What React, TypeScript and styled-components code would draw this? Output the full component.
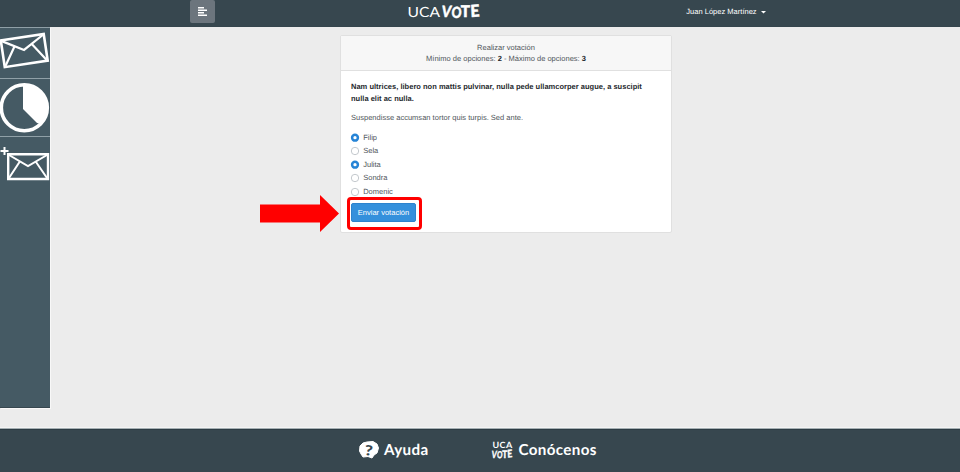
import React from 'react';
import styled, { createGlobalStyle } from 'styled-components';

const Global = createGlobalStyle`
  * { box-sizing: border-box; }
  body { margin: 0; background: #ececec; overflow: hidden; }
`;

const Page = styled.div`
  width: 960px;
  height: 472px;
  display: flex;
  flex-direction: column;
  background: #ececec;
  color: #50565b;
  font: 7.5px/11.6px 'Liberation Sans', Arial, sans-serif;
  letter-spacing: 0.015px;
  text-rendering: geometricPrecision;
`;
const Header = styled.header`
  height: 27px;
  flex: none;
  display: grid;
  grid-template-columns: 190px 1fr 1fr 190px;
  background: #37474f;
  border-bottom: 1px solid #35454d;
`;
const MenuButton = styled.button`
  width: 25px;
  height: 23px;
  padding: 0;
  border: 0;
  border-radius: 2px;
  background: #6c757d;
  display: flex;
  align-items: center;
  justify-content: center;
`;
const HeaderInner = styled.div`
  grid-column: 2 / 4;
  display: flex;
  align-items: flex-start;
`;
const Brand = styled.div`
  margin-left: 192px;
  height: 24px;
  width: 76px;
`;
const User = styled.div`
  margin-left: 203.3px;
  height: 24px;
  display: flex;
  align-items: center;
  gap: 4px;
  white-space: nowrap;
  color: #fff;
`;
const Body = styled.div`
  flex: none;
  height: 402px;
  display: flex;
  align-items: flex-start;
`;
const Sidebar = styled.nav`
  width: 50px;
  height: 381px;
  flex: none;
  background: #455a64;
  border-bottom: 1px solid #37474f;
  box-shadow: 1px 1px 0 #f8f8f8;
`;
const SideItem = styled.a<{ $h: number }>`
  display: block;
  height: ${p => p.$h}px;
  border-top: 1px solid #90a0a7;
  svg { display: block; }
`;
const Card = styled.section`
  margin: 8px 0 0 290px;
  width: 332px;
  height: 198px;
  background: #fff;
  border: 1px solid #e0e0e0;
  border-radius: 2px;
`;
const CardHeader = styled.div`
  height: 35px;
  padding-top: 5.6px;
  text-align: center;
  background: #f7f7f7;
  border-bottom: 1px solid #e0e0e0;
  strong { color: #212529; }
`;
const CardBody = styled.div`
  padding: 10px 10px 0;
`;
const Question = styled.p`
  margin: 0;
  color: #25292d;
  font-weight: bold;
`;
const Description = styled.p`
  margin: 8px 0 7px;
`;
const Options = styled.div`
  display: flex;
  flex-direction: column;
`;
const Option = styled.label`
  height: 13.5px;
  display: flex;
  align-items: center;
  gap: 4.2px;
`;
const RadioIcon = styled.svg`
  width: 8px;
  height: 8px;
  overflow: visible;
`;
const Submit = styled.button`
  display: block;
  position: relative;
  margin-top: 4.5px;
  width: 65px;
  height: 19px;
  padding: 1px 0 0;
  border: 1px solid #2d83cd;
  border-radius: 2px;
  background: #3490dc;
  color: #fff;
  font: inherit;
  white-space: nowrap;
`;
const Highlight = styled.span`
  position: absolute;
  left: -5px;
  top: -7px;
  width: 75px;
  height: 33px;
  border: 3px solid #f00;
  border-radius: 4px;
`;
const Arrow = styled.svg`
  position: absolute;
  left: -92px;
  top: -9px;
  overflow: visible;
`;
const Footer = styled.footer`
  flex: 1;
  display: flex;
  padding-left: 359px;
  gap: 62px;
  background: #37474f;
  border-top: 1px solid #2c3c44;
  box-shadow: 0 -1px 0 #a5afb3, 0 -2px 0 #f4f4f4;
`;
const FooterLink = styled.a`
  height: 39px;
  display: flex;
  align-items: center;
  gap: 5px;
  color: #fff;
  font: bold 15.2px/20px Lato, sans-serif;
  white-space: nowrap;
  letter-spacing: 0.35px;
`;

const Radio = ({ on }: { on?: boolean }) => (
  <RadioIcon viewBox="0 0 8 8">
    {on ? (
      <circle cx="4" cy="3.7" r="2.9" fill="#fff" stroke="#2684d6" strokeWidth="2.5" />
    ) : (
      <circle cx="4" cy="4" r="3.7" fill="#fff" stroke="#b5bbc0" strokeWidth=".8" />
    )}
  </RadioIcon>
);

const Envelope = () => (
  <g fill="none" stroke="#fff" strokeWidth="2.4">
    <path d="M1.2 1.2H41V26H1.2Z" />
    <path d="M2 2L21 13L40 2M12.5 9L2 25M29 9L40 25" strokeWidth="2" />
  </g>
);

const Vote = ({ size }: { size: number }) => (
  <g
    fontFamily="Lato, sans-serif"
    fontWeight="900"
    fontSize={size}
    letterSpacing="0"
    stroke="#fff"
    strokeWidth={size * 0.03}
  >
    <text transform="skewX(-8) scale(.86 1)">V</text>
    <text transform={`translate(${size * 0.64} ${size * 0.02}) rotate(7) scale(.78 .98)`}>O</text>
    <text transform={`translate(${size * 1.27} 0) scale(.98 1.04)`}>T</text>
    <text transform={`translate(${size * 1.9} 0) rotate(-3) scale(1 1.06)`}>E</text>
  </g>
);

const options = [
  { name: 'Filip', on: true },
  { name: 'Sela' },
  { name: 'Julita', on: true },
  { name: 'Sondra' },
  { name: 'Domenic' },
];

export default function App() {
  return (
    <Page>
      <Global />
      <Header>
        <HeaderInner>
          <MenuButton aria-label="Menú">
            <svg width="9" height="9" viewBox="0 0 9 9" stroke="#fff" strokeWidth="1.5">
              <path d="M0 .8H6M0 3.3H9M0 5.8H6M0 8.2H9" />
            </svg>
          </MenuButton>
          <Brand>
            <svg width="76" height="24" fill="#fff">
              <text x="0.5" y="16.8" fontFamily="Lato, sans-serif" fontSize="14" textLength="32.5" lengthAdjust="spacingAndGlyphs">UCA</text>
              <g transform="translate(34 17)"><Vote size={15.6} /></g>
            </svg>
          </Brand>
          <User>
            Juan López Martínez
            <svg width="5" height="3" fill="#fff"><path d="M0 0H5L2.5 2.6Z" /></svg>
          </User>
        </HeaderInner>
      </Header>
      <Body>
        <Sidebar>
          <SideItem $h={51}>
            <svg width="50" height="50"><g transform="translate(-.7 11.3) rotate(-8.5) scale(1.09)"><Envelope /></g></svg>
          </SideItem>
          <SideItem $h={58}>
            <svg width="50" height="57">
              <circle cx="24.3" cy="28.8" r="23" fill="none" stroke="#fff" strokeWidth="3.6" />
              <path d="M23 30V5H24.3A23.8 23.8 0 0 1 41.5 45L37 44Z" fill="#fff" />
            </svg>
          </SideItem>
          <SideItem $h={60}>
            <svg width="50" height="59">
              <path d="M0.5 14H8.5M4.5 10V18" stroke="#fff" strokeWidth="2" />
              <g transform="translate(7 16)"><Envelope /></g>
            </svg>
          </SideItem>
        </Sidebar>
        <Card>
          <CardHeader>
            Realizar votación<br />
            Mínimo de opciones: <strong>2</strong> - Máximo de opciones: <strong>3</strong>
          </CardHeader>
          <CardBody>
            <Question>
              Nam ultrices, libero non mattis pulvinar, nulla pede ullamcorper augue, a suscipit<br />
              nulla elit ac nulla.
            </Question>
            <Description>Suspendisse accumsan tortor quis turpis. Sed ante.</Description>
            <Options>
              {options.map(o => (
                <Option key={o.name}><Radio on={o.on} />{o.name}</Option>
              ))}
            </Options>
            <Submit>
              Enviar votación
              <Highlight />
              <Arrow width="79" height="37"><path d="M0 9.5H60V0L79 18.5L60 37V27.5H0Z" fill="#f00" /></Arrow>
            </Submit>
          </CardBody>
        </Card>
      </Body>
      <Footer>
        <FooterLink>
          <svg width="20" height="18" viewBox="0 0 20 18" fill="#fff">
            <path d="M4 2L8 1L14 .5L18 3L19.5 7L18 12L15 14L13 17L9 15.5L4 16L2 13L.5 10L1 5Z" stroke="#fff" strokeLinejoin="round" />
            <text transform="translate(5.2 14) rotate(5) scale(1.25 1)" fill="#37474f" fontFamily="Lato, sans-serif" fontWeight="900" fontSize="14">?</text>
          </svg>
          Ayuda
        </FooterLink>
        <FooterLink>
          <svg width="23" height="18" fill="#fff">
            <text x="1.5" y="7.3" fontFamily="Lato, sans-serif" fontSize="8.5" textLength="20" lengthAdjust="spacingAndGlyphs">UCA</text>
            <g transform="translate(.3 16.5) scale(.93 1.08)"><Vote size={9.2} /></g>
          </svg>
          Conócenos
        </FooterLink>
      </Footer>
    </Page>
  );
}
